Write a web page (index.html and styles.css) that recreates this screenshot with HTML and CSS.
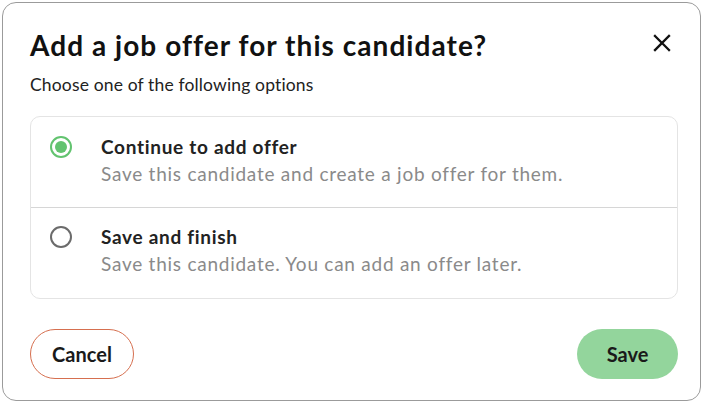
FILE: index.html
```html
<!DOCTYPE html>
<html lang="en">
<head>
<meta charset="utf-8">
<link rel="stylesheet" href="styles.css">
</head>
<body>
<div class="dialog">
  <div class="header">
    <h1 class="title">Add a job offer for this candidate?</h1>
    <button class="close" aria-label="Close">
      <svg width="18" height="18" viewBox="0 0 18 18"><path d="M2 2 L16 16 M16 2 L2 16" stroke="#111" stroke-width="2.3" stroke-linecap="square"/></svg>
    </button>
  </div>
  <p class="subtitle">Choose one of the following options</p>
  <div class="options">
    <label class="option">
      <span class="radio checked"><span class="dot"></span></span>
      <span class="text">
        <span class="opt-title">Continue to add offer</span>
        <span class="opt-desc">Save this candidate and create a job offer for them.</span>
      </span>
    </label>
    <label class="option">
      <span class="radio"></span>
      <span class="text">
        <span class="opt-title">Save and finish</span>
        <span class="opt-desc">Save this candidate. You can add an offer later.</span>
      </span>
    </label>
  </div>
  <div class="footer">
    <button class="btn cancel">Cancel</button>
    <button class="btn save">Save</button>
  </div>
</div>
</body>
</html>
```
FILE: styles.css
```css
* { box-sizing: border-box; }
html, body { margin: 0; padding: 0; background: #fff; }
body { font-family: Lato, "Noto Sans", sans-serif; color: #1a1a1a; }
.dialog {
  margin: 2px;
  width: 699px;
  height: 399px;
  border: 1px solid #9b9b9b;
  border-radius: 14px;
  padding: 25px 22px 0 27px;
  display: flex;
  flex-direction: column;
}
.header { display: flex; align-items: center; justify-content: space-between; height: 34px; }
.title { margin: 0; font-size: 28px; line-height: 34px; font-weight: 700; letter-spacing: 1.05px; color: #111; }
.close { border: 0; background: none; padding: 0; margin: 0 7px 4px 0; width: 18px; height: 18px; display: flex; }
.subtitle { margin: 12px 0 0; font-size: 17.5px; line-height: 22px; color: #222; letter-spacing: 0.15px; }
.options {
  margin-top: 20px;
  border: 1px solid #e4e4e4;
  border-radius: 10px;
  display: flex;
  flex-direction: column;
}
.option { display: flex; align-items: flex-start; gap: 29px; padding: 19px 20px 0 19px; height: 90px; }
.option + .option { border-top: 1px solid #d6d6d6; height: 91px; padding-top: 18px; }
.radio {
  flex: none;
  width: 22px; height: 22px;
  border: 2px solid #6b6b6b;
  border-radius: 50%;
  margin-top: 0;
  display: flex; align-items: center; justify-content: center;
}
.radio.checked { border-color: #62c36f; }
.dot { width: 12px; height: 12px; border-radius: 50%; background: #62c36f; }
.text { display: flex; flex-direction: column; gap: 4px; }
.opt-title { font-size: 19px; line-height: 22px; font-weight: 700; color: #222; letter-spacing: 0.7px; }
.opt-desc { font-size: 19px; line-height: 24px; color: #8a8a8a; letter-spacing: 0.75px; }
.footer { margin-top: 30px; display: flex; justify-content: space-between; }
.btn {
  height: 50px;
  border-radius: 25px;
  font-family: Lato, "Noto Sans", sans-serif;
  font-size: 20px;
  font-weight: 700;
  color: #1a1a1a;
  cursor: pointer;
  padding: 0;
}
.cancel { width: 104px; background: #fff; border: 1.5px solid #d66f4f; }
.save { width: 101px; background: #93d59c; border: 0; }
```
